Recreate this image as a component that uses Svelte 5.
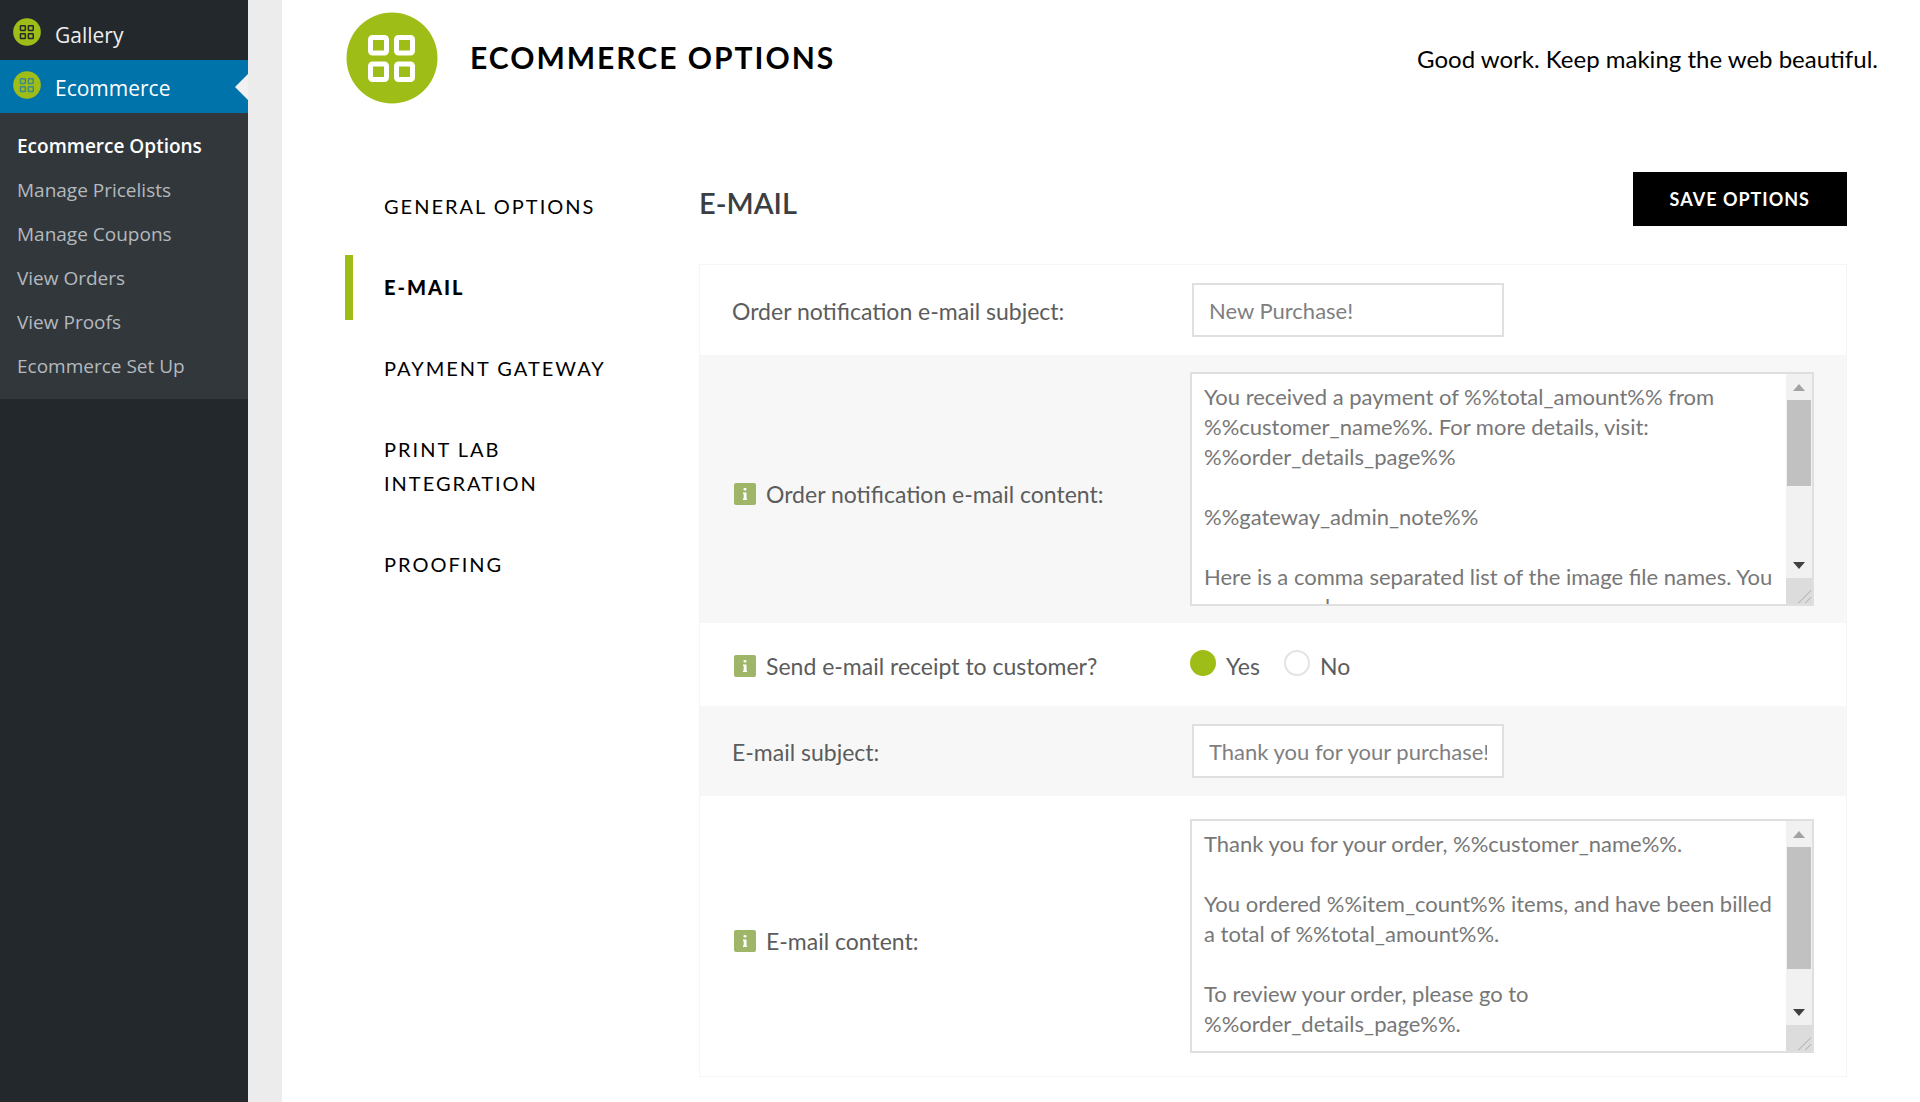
<script>
    const menu = [
        { label: 'Gallery', color: '#23282d', active: false },
        { label: 'Ecommerce', color: '#3d8a86', active: true }
    ];

    const submenu = [
        'Ecommerce Options',
        'Manage Pricelists',
        'Manage Coupons',
        'View Orders',
        'View Proofs',
        'Ecommerce Set Up'
    ];

    const tabs = ['General Options', 'E-mail', 'Payment Gateway', 'Print Lab Integration', 'Proofing'];

    let activeSub = $state('Ecommerce Options');
    let activeTab = $state('E-mail');
    let sendReceipt = $state('yes');

    // thumb is the scrollbar handle height
    let fields = $state([
        {
            id: 'order-subject',
            type: 'text',
            label: 'Order notification e-mail subject:',
            value: 'New Purchase!'
        },
        {
            id: 'order-content',
            type: 'area',
            label: 'Order notification e-mail content:',
            info: true,
            thumb: 86,
            value: 'You received a payment of %%total_amount%% from %%customer_name%%. For more details, visit: %%order_details_page%%\n\n%%gateway_admin_note%%\n\nHere is a comma separated list of the image file names. You can copy and'
        },
        {
            id: 'send-receipt',
            type: 'radio',
            label: 'Send e-mail receipt to customer?',
            info: true
        },
        {
            id: 'receipt-subject',
            type: 'text',
            label: 'E-mail subject:',
            value: 'Thank you for your purchase!'
        },
        {
            id: 'receipt-content',
            type: 'area',
            label: 'E-mail content:',
            info: true,
            thumb: 122,
            value: 'Thank you for your order, %%customer_name%%.\n\nYou ordered %%item_count%% items, and have been billed a total of %%total_amount%%.\n\nTo review your order, please go to %%order_details_page%%.'
        }
    ]);

    function scrollArea(id, amount) {
        document.getElementById(id).scrollTop += amount;
    }
</script>

{#snippet logo(color)}
    <svg class="logo" viewBox="0 0 92 92" aria-hidden="true">
        <circle cx="46" cy="46" r="45.500" fill="#9ebd16" />
        <g fill="none" stroke={color} stroke-width="5">
            <rect x="24.5" y="25.5" width="16" height="15.5" rx="2" />
            <rect x="50.5" y="25.5" width="16" height="15.5" rx="2" />
            <rect x="24.5" y="52" width="16" height="15.5" rx="2" />
            <rect x="50.5" y="52" width="16" height="15.5" rx="2" />
        </g>
    </svg>
{/snippet}

{#snippet infoIcon()}
    <svg class="info" viewBox="0 0 22 22" aria-hidden="true">
        <rect width="22" height="22" rx="2" fill="#9fb668" />
        <rect x="9.500" y="5" width="3" height="2.500" rx="1" fill="#fff" />
        <path d="M9 9.500h3.500v6h.5V17H9v-1.500h.7V11H9z" fill="#fff" />
    </svg>
{/snippet}

<div class="admin">
    <aside class="sidebar">
        <nav>
            {#each menu as item}
                <a class="menu-item" class:active={item.active} href="#{item.label.toLowerCase()}">
                    {@render logo(item.color)}
                    <span>{item.label}</span>
                </a>
            {/each}
            <div class="submenu">
                {#each submenu as item}
                    <a href="#sub" class:current={activeSub === item} onclick={() => (activeSub = item)}>{item}</a>
                {/each}
            </div>
        </nav>
    </aside>

    <main class="page">
        <header class="page-header">
            {@render logo('#fff')}
            <h1>Ecommerce Options</h1>
            <p>Good work. Keep making the web beautiful.</p>
        </header>

        <div class="body">
            <nav class="tabs">
                {#each tabs as tab}
                    <a href="#tab" class:selected={activeTab === tab} onclick={() => (activeTab = tab)}>{tab}</a>
                {/each}
            </nav>

            <section class="options">
                <div class="options-top">
                    <h2>E-MAIL</h2>
                    <button class="save" type="button">Save Options</button>
                </div>

                <form class="panel">
                    {#each fields as field}
                        <div class="row {field.type}">
                            {#if field.type === 'radio'}
                                <span class="label" id="{field.id}-label">
                                    {@render infoIcon()}
                                    {field.label}
                                </span>
                                <div class="choices" role="radiogroup" aria-labelledby="{field.id}-label">
                                    <label>
                                        <input type="radio" name={field.id} value="yes" bind:group={sendReceipt} />
                                        <span>Yes</span>
                                    </label>
                                    <label>
                                        <input type="radio" name={field.id} value="no" bind:group={sendReceipt} />
                                        <span>No</span>
                                    </label>
                                </div>
                            {:else}
                                <label class="label" for={field.id}>
                                    {#if field.info}{@render infoIcon()}{/if}
                                    {field.label}
                                </label>
                                {#if field.type === 'text'}
                                    <input id={field.id} class="text-input" type="text" bind:value={field.value} />
                                {:else}
                                    <div class="area-box">
                                        <textarea id={field.id} spellcheck="false" bind:value={field.value}></textarea>
                                        <div class="scrollbar">
                                            <button type="button" class="up" aria-label="Scroll up" onclick={() => scrollArea(field.id, -30)}>
                                                <svg viewBox="0 0 12 7"><path d="M6 0l6 7H0z" fill="#a3a3a3" /></svg>
                                            </button>
                                            <div class="track">
                                                <div class="thumb" style="height: {field.thumb}px"></div>
                                            </div>
                                            <button type="button" class="down" aria-label="Scroll down" onclick={() => scrollArea(field.id, 30)}>
                                                <svg viewBox="0 0 12 7"><path d="M0 0h12L6 7z" fill="#404040" /></svg>
                                            </button>
                                            <svg class="grip" viewBox="0 0 27 27">
                                                <path d="M13 26L26 13M20 26l6-6" stroke="#a8a8a8" fill="none" />
                                            </svg>
                                        </div>
                                    </div>
                                {/if}
                            {/if}
                        </div>
                    {/each}
                </form>
            </section>
        </div>
    </main>
</div>

<style>
    :global(body) {
        margin: 0;
        background: #fff;
    }

    .admin {
        display: flex;
        min-height: 100vh;
        font-family: Lato, sans-serif;
        color: #000;
    }

    a {
        color: inherit;
        text-decoration: none;
    }

    /* Sidebar */
    .sidebar {
        flex: 0 0 248px;
        padding-top: 7px;
        box-sizing: border-box;
        background: #23282d;
        font-family: "Open Sans", "Noto Sans", sans-serif;
    }

    .menu-item {
        position: relative;
        display: flex;
        align-items: center;
        gap: 14px;
        box-sizing: border-box;
        height: 53px;
        padding: 0 0 3px 13px;
        font-size: 21px;
        color: #eee;
    }

    .menu-item span {
        padding-top: 5px;
    }

    .menu-item .logo {
        width: 28px;
        height: 28px;
    }

    .menu-item.active {
        background: #0073aa;
        color: #fff;
    }

    .menu-item.active::after {
        content: '';
        position: absolute;
        right: 0;
        top: 14px;
        border: 13px solid transparent;
        border-left: 0;
        border-right-color: #f1f1f1;
    }

    .submenu {
        padding: 11px 0;
        background: #32373c;
    }

    .submenu a {
        display: block;
        padding-left: 17px;
        font-size: 19px;
        line-height: 44px;
        color: #b4b9be;
    }

    .submenu a.current {
        font-weight: 600;
        color: #fff;
    }

    /* Page */
    .page {
        flex: 1;
        min-width: 0;
        border-left: 34px solid #ececec;
    }

    .page-header {
        display: flex;
        align-items: center;
        padding: 12px 42px 0 64px;
    }

    .page-header .logo {
        width: 92px;
        height: 92px;
    }

    h1 {
        margin: 0 0 0 32px;
        padding-bottom: 2px;
        font-size: 30px;
        font-weight: 700;
        letter-spacing: 2px;
        text-transform: uppercase;
    }

    .page-header p {
        margin: 0 0 0 auto;
        font-size: 24px;
    }

    .body {
        display: flex;
        padding: 68px 73px 24px 63px;
    }

    .tabs {
        display: flex;
        flex-direction: column;
        flex: 0 0 354px;
        gap: 16px;
        padding-top: 2px;
        box-sizing: border-box;
    }

    .tabs a {
        max-width: 240px;
        padding: 15px 0 16px 31px;
        border-left: 8px solid transparent;
        font-size: 20px;
        line-height: 34px;
        letter-spacing: 2px;
        text-transform: uppercase;
    }

    .tabs a.selected {
        border-color: #9ebd16;
        font-weight: 900;
    }

    .options {
        flex: 1;
        min-width: 0;
    }

    .options-top {
        display: flex;
        align-items: center;
        justify-content: space-between;
        margin-bottom: 38px;
    }

    h2 {
        margin: 0;
        padding-top: 8px;
        font-size: 29px;
        line-height: 34px;
        font-weight: 600;
        color: #3a3f44;
    }

    .save {
        height: 54px;
        padding: 0 37px;
        border: 0;
        background: #000;
        color: #fff;
        font: bold 18px Lato, sans-serif;
        letter-spacing: 1px;
        text-transform: uppercase;
    }

    /* Form rows */
    .panel {
        border: 1px solid #f5f5f5;
    }

    .row {
        display: grid;
        grid-template-columns: 458px 1fr;
        align-items: center;
        padding: 18px 32px;
    }

    .row:nth-child(even) {
        background: #f7f7f7;
    }

    .row.area {
        padding: 17px 32px;
    }

    .row.area:last-child {
        padding: 23px 32px;
    }

    .row.radio {
        height: 83px;
        padding: 0 32px;
    }

    .label {
        display: flex;
        align-items: center;
        gap: 10px;
        padding-top: 2px;
        font-size: 23px;
        line-height: 30px;
        color: #5c5c5c;
    }

    .area .label {
        padding-top: 10px;
    }

    .info {
        width: 22px;
        height: 22px;
        margin-left: 2px;
    }

    .text-input {
        box-sizing: border-box;
        width: 312px;
        height: 54px;
        margin-left: 2px;
        padding: 0 15px;
        border: 2px solid #dfdfdf;
        background: #fff;
        font: 22px Lato, sans-serif;
        color: #7f7f7f;
    }

    .area-box {
        display: flex;
        box-sizing: border-box;
        height: 234px;
        border: 2px solid #dfdfdf;
        background: #fff;
    }

    textarea {
        flex: 1;
        min-width: 0;
        padding: 8px 12px 0;
        border: 0;
        outline: 0;
        resize: none;
        overflow: hidden;
        background: transparent;
        font: 22px/30px Lato, sans-serif;
        color: #777;
    }

    .scrollbar {
        display: flex;
        flex-direction: column;
        width: 26px;
        background: #f1f1f1;
    }

    .scrollbar button {
        display: flex;
        align-items: center;
        justify-content: center;
        height: 26px;
        padding: 0;
        border: 0;
        background: none;
    }

    .scrollbar button svg {
        width: 12px;
        height: 7px;
    }

    .track {
        flex: 1;
        padding: 0 1px;
    }

    .thumb {
        background: #c1c1c1;
    }

    .grip {
        width: 26px;
        height: 26px;
        background: #dcdcdc;
    }

    .choices {
        display: flex;
        gap: 24px;
        padding-bottom: 4px;
        font-size: 23px;
        color: #5c5c5c;
    }

    .choices label {
        display: flex;
        align-items: center;
        gap: 10px;
    }

    .choices span {
        padding-top: 6px;
    }

    .choices input {
        appearance: none;
        width: 26px;
        height: 26px;
        margin: 0;
        border: 2px solid #e3e3e3;
        border-radius: 50%;
        background: #fff;
    }

    .choices input:checked {
        border-color: #9ebd16;
        background: #9ebd16;
    }
</style>
